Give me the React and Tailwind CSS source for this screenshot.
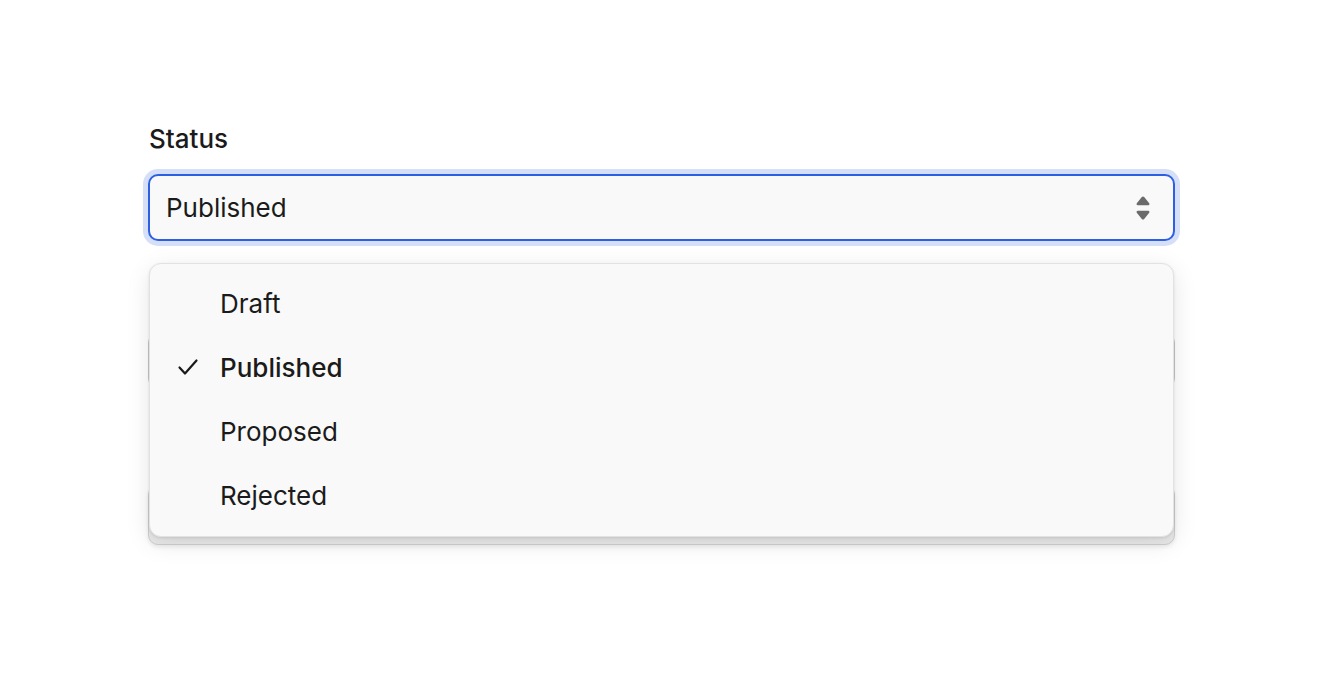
import React from "react";

function UpDown() {
  return (
    <svg width="16" height="26" viewBox="0 0 16 26" fill="#6b6b6b">
      <path d="M8 1.5c.5 0 .9.2 1.2.6l5 6.2c.6.8.1 1.9-.9 1.9H2.7c-1 0-1.5-1.1-.9-1.9l5-6.2c.3-.4.7-.6 1.2-.6z" />
      <path d="M8 24.5c-.5 0-.9-.2-1.2-.6l-5-6.2c-.6-.8-.1-1.9.9-1.9h10.6c1 0 1.5 1.1.9 1.9l-5 6.2c-.3.4-.7.6-1.2.6z" />
    </svg>
  );
}

function Check() {
  return (
    <svg width="24" height="24" viewBox="0 0 24 24" fill="none" stroke="#1a1a1a" strokeWidth="2.2" strokeLinecap="round" strokeLinejoin="round">
      <path d="M3.5 12.5l5.5 6L20.5 5.5" />
    </svg>
  );
}

export default function App() {
  const items = ["Draft", "Published", "Proposed", "Rejected"];
  return (
    <div
      className="min-h-[700px] bg-white pt-[124px] pl-[148px] pr-[149px] text-[#1b1b1b]"
      style={{ fontFamily: "Inter, 'Liberation Sans', sans-serif" }}
    >
      <div className="relative">
        <div className="text-[26px] leading-[30px] pl-[1px] font-medium">Status</div>
        <div className="mt-[20px] h-[67px] flex items-center justify-between rounded-[10px] border-2 border-[#2d5fe3] bg-[#f9f9f9] pl-[16px] pr-[22px] shadow-[0_0_0_5px_#d5dff8]">
          <span className="text-[26px]">Published</span>
          <UpDown />
        </div>
        <div className="mt-[92px] h-[55px] rounded-[10px] border border-[#c6c6c6] bg-[#f7f7f7]" />
        <div className="mt-[97px] h-[60px] rounded-[10px] border border-[#cfcfcf] bg-[#e9e9e9] shadow-[0_2px_4px_rgba(0,0,0,0.08)]" />

        <div className="absolute left-[1px] right-[1px] top-[139px] h-[274px] rounded-[12px] border border-[#e2e2e2] bg-[#f9f9f9] shadow-[0_6px_24px_rgba(0,0,0,0.10),0_1px_3px_rgba(0,0,0,0.10)] flex flex-col pt-[7px] pb-[9px]">
          {items.map((it) => (
            <div key={it} className="h-[64.5px] flex items-center">
              <div className="w-[70px] flex justify-end pr-[20px]">
                {it === "Published" ? <Check /> : null}
              </div>
              <span className={"text-[26px] " + (it === "Published" ? "font-medium" : "")}>{it}</span>
            </div>
          ))}
        </div>
      </div>
    </div>
  );
}
